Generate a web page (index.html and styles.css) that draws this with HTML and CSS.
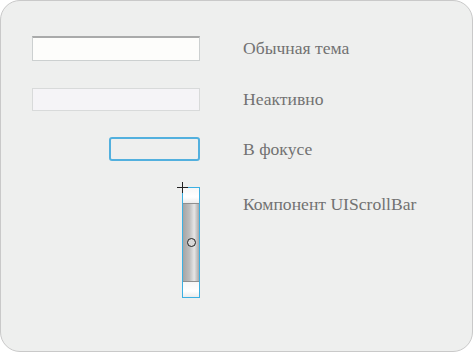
FILE: index.html
```html
<!DOCTYPE html>
<html lang="ru">

<head>
    <meta charset="UTF-8">
    <title>Темы компонентов</title>
    <link rel="stylesheet" href="styles.css">
</head>

<body>
    <div class="panel">
        <div class="row row-normal">
            <div class="field"><div class="input input-normal"></div></div>
            <div class="label">Обычная тема</div>
        </div>
        <div class="row row-disabled">
            <div class="field"><div class="input input-disabled"></div></div>
            <div class="label">Неактивно</div>
        </div>
        <div class="row row-focus">
            <div class="field"><div class="input input-focus"></div></div>
            <div class="label">В фокусе</div>
        </div>
        <div class="row row-scroll">
            <div class="field">
                <!-- UIScrollBar: arrow buttons and thumb -->
                <div class="scrollbar">
                    <div class="sb-button"></div>
                    <div class="sb-thumb"><span class="sb-grip"></span></div>
                    <div class="sb-button"></div>
                    <span class="cursor"></span>
                </div>
            </div>
            <div class="label label-top">Компонент UIScrollBar</div>
        </div>
    </div>
</body>

</html>
```

FILE: styles.css
```css
/* Panel with component themes */
html,
body {
    margin: 0;
    background: #ffffff;
}

.panel {
    box-sizing: border-box;
    width: 473px;
    height: 352px;
    border: 1px solid #c9c9c9;
    border-radius: 20px;
    background: #eeefee;
    padding-top: 35px;
    display: flex;
    flex-direction: column;
    font-family: "Liberation Serif", serif;
    font-size: 17.6px;
    color: #727272;
}

.row {
    display: flex;
    align-items: center;
}

.row-normal {
    height: 25px;
}

.row-disabled {
    height: 23px;
    margin-top: 27px;
}

.row-focus {
    height: 24px;
    margin-top: 26px;
}

.row-scroll {
    align-items: flex-start;
    margin-top: 26px;
}

.field {
    width: 168px;
    margin-left: 31px;
    display: flex;
    justify-content: flex-end;
}

.label {
    margin-left: 43px;
}

.label-top {
    margin-top: 7px;
}

.input {
    box-sizing: border-box;
}

.input-normal {
    width: 168px;
    height: 25px;
    background: #fdfdfb;
    border: 1px solid #ccd0d0;
    border-top: 2px solid #a9aaaa;
}

.input-disabled {
    width: 168px;
    height: 23px;
    background: #f5f4f7;
    border: 1px solid #d8dada;
}

.input-focus {
    width: 91px;
    height: 24px;
    background: #eeefee;
    border: 2px solid #52b0de;
    border-radius: 3px;
}

/* Scrollbar */
.scrollbar {
    position: relative;
    box-sizing: border-box;
    width: 18px;
    height: 111px;
    border: 1px solid #3cb0e2;
    display: flex;
    flex-direction: column;
}

.sb-button {
    height: 15px;
    background: linear-gradient(#f7f7f7, #ffffff 60%, #ececec);
}

.sb-thumb {
    flex: 1;
    display: flex;
    align-items: center;
    justify-content: center;
    background: linear-gradient(90deg, #a5a5a5, #bdbdbd 40%, #e6e6e6 70%, #a8a8a8);
    border-top: 1px solid #8f8f8f;
    border-bottom: 1px solid #8f8f8f;
}

.sb-grip {
    box-sizing: border-box;
    width: 9px;
    height: 9px;
    border: 1.5px solid #222222;
    border-radius: 50%;
    background: #d8d8d8;
}

/* crosshair cursor over the corner */
.cursor {
    position: absolute;
    left: -6px;
    top: -6px;
    width: 11px;
    height: 11px;
    background:
        linear-gradient(#222, #222) 5px 0 / 1px 11px no-repeat,
        linear-gradient(#222, #222) 0 5px / 11px 1px no-repeat;
}
```
